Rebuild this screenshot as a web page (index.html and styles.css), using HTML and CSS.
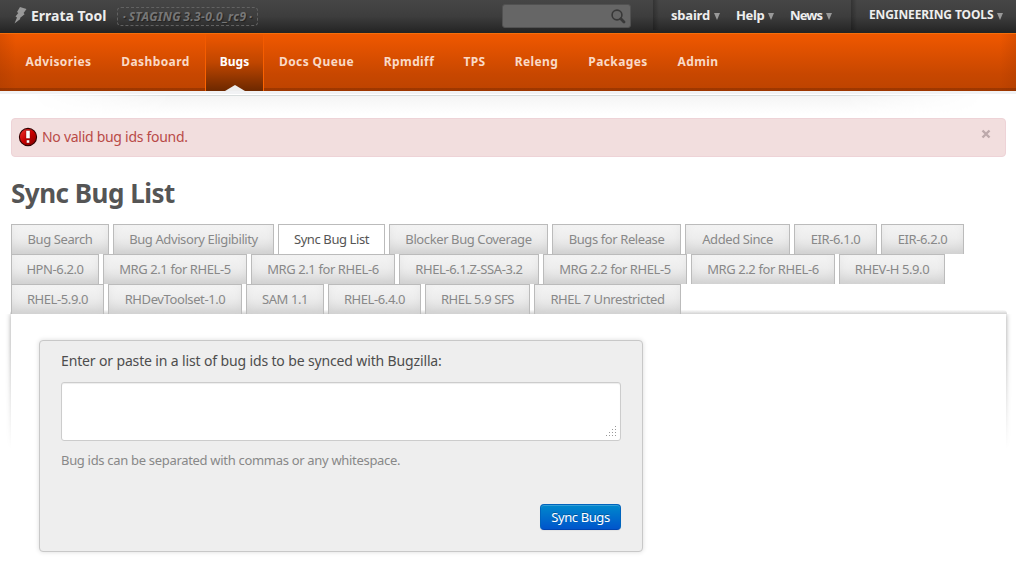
FILE: index.html
```html
<!DOCTYPE html>
<html lang="en">
<head>
<meta charset="utf-8">
<title>Sync Bug List</title>
<link rel="stylesheet" href="styles.css">
</head>
<body>
<header class="topbar">
  <svg class="bolt" width="13" height="17" viewBox="0 0 13 17"><path d="M6 0L12.5 2 9.6 6 10.6 7.2 6 11 6.3 12 .5 16.5 3 10.5 1.5 9.5 4.3 6 3 5z" fill="#999"/></svg>
  <a class="brand">Errata Tool</a>
  <span class="staging">· STAGING 3.3-0.0_rc9 ·</span>
  <div class="search"><svg width="15" height="15" viewBox="0 0 15 15" fill="none" stroke="#383838"><circle cx="6" cy="6" r="4.9" stroke-width="1.6"/><path d="M9.8 9.8L13 13" stroke-width="2.8" stroke-linecap="round"/></svg></div>
  <div class="menus">
    <a class="m-user">sbaird<i></i></a>
    <a class="m-help">Help<i></i></a>
    <a class="m-news">News<i></i></a>
  </div>
  <div class="tools"><a>ENGINEERING TOOLS<i></i></a></div>
</header>
<nav class="nav">
  <a style="width:95px">Advisories</a>
  <a style="width:99px">Dashboard</a>
  <a class="current" style="width:59px">Bugs</a>
  <a style="width:105px">Docs Queue</a>
  <a style="width:80px">Rpmdiff</a>
  <a style="width:51px">TPS</a>
  <a style="width:73px">Releng</a>
  <a style="width:90px">Packages</a>
  <a style="width:70px">Admin</a>
</nav>
<div class="under"><div class="under-shade"></div></div>
<main>
  <div class="alert">
    <svg width="20" height="20" viewBox="0 0 20 20"><defs><linearGradient id="g" x2="1" y2="1"><stop offset="0" stop-color="#ed3832"/><stop offset=".5" stop-color="#c80000"/><stop offset="1" stop-color="#7d0000"/></linearGradient></defs><circle cx="10" cy="10" r="8.6" fill="url(#g)" stroke="#300" stroke-width="1.1"/><path d="M8 3.5h4v8H8zM8.5 13h3v3h-3z" fill="#fff" stroke="#700" stroke-width=".4"/></svg>
    <span class="alert-text">No valid bug ids found.</span>
    <svg class="close" width="10" height="10" viewBox="0 0 10 10"><path d="M1.5 1.5L8.5 8.5M8.5 1.5L1.5 8.5" stroke="#bda9ab" stroke-width="2.4"/></svg>
  </div>
  <h1>Sync Bug List</h1>
  <div class="tabs">
    <div class="row">
      <a style="width:98px">Bug Search</a>
      <a style="width:161px">Bug Advisory Eligibility</a>
      <a class="active" style="width:107px">Sync Bug List</a>
      <a style="width:159px">Blocker Bug Coverage</a>
      <a style="width:129px">Bugs for Release</a>
      <a style="width:105px">Added Since</a>
      <a style="width:83px">EIR-6.1.0</a>
      <a style="width:83px">EIR-6.2.0</a>
    </div>
    <div class="row">
      <a style="width:88px">HPN-6.2.0</a>
      <a style="width:144px">MRG 2.1 for RHEL-5</a>
      <a style="width:144px">MRG 2.1 for RHEL-6</a>
      <a style="width:140px">RHEL-6.1.Z-SSA-3.2</a>
      <a style="width:144px">MRG 2.2 for RHEL-5</a>
      <a style="width:144px">MRG 2.2 for RHEL-6</a>
      <a style="width:106px">RHEV-H 5.9.0</a>
    </div>
    <div class="row">
      <a style="width:93px">RHEL-5.9.0</a>
      <a style="width:134px">RHDevToolset-1.0</a>
      <a style="width:78px">SAM 1.1</a>
      <a style="width:93px">RHEL-6.4.0</a>
      <a style="width:105px">RHEL 5.9 SFS</a>
      <a style="width:147px">RHEL 7 Unrestricted</a>
    </div>
  </div>
  <section class="panel">
    <form class="card">
      <label for="ids">Enter or paste in a list of bug ids to be synced with Bugzilla:</label>
      <div class="field">
        <textarea id="ids"></textarea>
        <svg class="grip" width="10" height="10" viewBox="0 0 10 10" fill="#999"><path d="M9 0h1v1H9zM6 3h1v1H6zM9 3h1v1H9zM3 6h1v1H3zM6 6h1v1H6zM9 6h1v1H9zM0 9h1v1H0zM3 9h1v1H3zM6 9h1v1H6zM9 9h1v1H9z"/></svg>
      </div>
      <p>Bug ids can be separated with commas or any whitespace.</p>
      <button type="button">Sync Bugs</button>
    </form>
  </section>
</main>
</body>
</html>
```
FILE: styles.css
```css
* { box-sizing: border-box; }
body {
  margin: 0;
  width: 1016px;
  height: 562px;
  overflow: hidden;
  background: #fff;
  font: 13px/18px "Noto Sans", "Open Sans", sans-serif;
  color: #4d4d4d;
}
a, span, label, p, h1, button { white-space: nowrap; }

.topbar {
  display: flex;
  height: 33px;
  background: linear-gradient(#464646, #3d3d3d 50%, #232323);
  color: #eee;
  font-weight: bold;
}
.bolt { margin: 7px 0 0 14px; flex: none; }
.brand { width: 76px; margin: 7px 0 0 4px; font-size: 14px; letter-spacing: 0; }
.staging {
  width: 141px;
  height: 19px;
  margin: 7px 0 0 10px;
  border: 1px dashed #626262;
  border-radius: 4px;
  color: #777;
  font-size: 12px;
  line-height: 17px;
  font-style: italic;
  letter-spacing: 0.35px;
  word-spacing: -1px;
  text-align: center;
  text-indent: 0;
  text-shadow: 1px 1px 1px #222;
}
.search {
  display: flex;
  justify-content: flex-end;
  width: 129px;
  height: 24px;
  margin: 4px 0 0 244px;
  padding: 4px 4px 0 0;
  border: 1px solid #515151;
  border-radius: 3px;
  background: #666;
}
.menus {
  display: flex;
  width: 198px;
  height: 30px;
  margin-left: 22px;
  padding: 6px 0 0 18px;
  background: linear-gradient(90deg, rgba(0,0,0,.25), rgba(0,0,0,0) 6px);
}
.tools {
  height: 30px;
  padding: 6px 0 0 18px;
  font-size: 12px;
  background: linear-gradient(90deg, rgba(0,0,0,.25), rgba(0,0,0,0) 6px);
}
.menus a, .tools a { display: flex; justify-content: space-between; }
.menus i, .tools i {
  width: 6px;
  height: 7px;
  margin-top: 7px;
  background: #999;
  clip-path: polygon(0 0, 100% 0, 50% 100%);
}
.m-user { width: 49px; letter-spacing: -0.2px; }
.m-help { width: 38px; margin-left: 16px; letter-spacing: -0.4px; }
.m-news { width: 42px; margin-left: 16px; letter-spacing: -0.9px; }
.tools a { width: 134px; letter-spacing: -0.1px; }

.nav {
  display: flex;
  height: 58px;
  padding-left: 11px;
  border-top: 1px solid #f56f0b;
  background:
    linear-gradient(rgba(120,40,0,.45), rgba(120,40,0,.45)) 0 100% / 100% 3px no-repeat,
    linear-gradient(90deg, rgba(150,50,0,.22), rgba(150,50,0,0) 16px, rgba(150,50,0,0) 1000px, rgba(150,50,0,.22)),
    linear-gradient(#f05800, #c84700 70%, #bd4300);
}
.nav a {
  padding-top: 19px;
  text-align: center;
  font-size: 12px;
  font-weight: bold;
  letter-spacing: 0.4px;
  color: #fadac7;
}
.nav .current {
  position: relative;
  border: solid #f06310;
  border-width: 0 1px;
  border-image: linear-gradient(#f05800, #ff6600) 1;
  border-image-width: 0 1px;
  background: linear-gradient(#ee5700, #c04600 50%, #6c2800);
  letter-spacing: 0;
  color: #fff;
}
.nav .current::after {
  content: "";
  position: absolute;
  left: 19px;
  bottom: 0;
  width: 20px;
  height: 6px;
  background: #eee;
  clip-path: polygon(50% 0, 100% 100%, 0 100%);
}
.under { height: 27px; border-top: 3px solid #f1f2f4; padding: 1px 30px 0; }
.under-shade {
  height: 20px;
  border-top: 1px solid #d8dddd;
  background: linear-gradient(#f5f5f5, #fff);
  -webkit-mask-image: linear-gradient(90deg, transparent, #000 15%, #000 85%, transparent);
  mask-image: linear-gradient(90deg, transparent, #000 15%, #000 85%, transparent);
}

main { padding: 0 10px 0 11px; }
.alert {
  display: flex;
  height: 39px;
  padding: 8px 15px 0 6px;
  border: 1px solid #eed3d7;
  border-radius: 4px;
  background: #f2dede;
  color: #b94a48;
}
.alert-text { margin: 1px 0 0 4px; font-size: 14px; letter-spacing: -0.28px; }
.close { margin: 2px -1px 0 auto; }
h1 {
  height: 36px;
  margin: 18px 0 13px;
  font-size: 26px;
  line-height: 36px;
  letter-spacing: -0.5px;
  color: #555;
}
.row { display: flex; gap: 4px; height: 30px; }
.row a {
  border: 1px solid #bbb;
  border-bottom: 0;
  background: linear-gradient(#f4f4f4, #ededed 45%, #d8d8d8);
  box-shadow: inset 0 -3px 10px rgba(0,0,0,.045);
  color: #888;
  text-align: center;
  line-height: 29px;
  letter-spacing: -0.4px;
}
.row .active { background: #fff; box-shadow: none; color: #555; }
.panel {
  position: relative;
  height: 248px;
  padding: 26px 0 0 28px;
  background: #fff;
}
.panel::before {
  content: "";
  position: absolute;
  z-index: -1;
  inset: 0;
  box-shadow: 0 0 5px rgba(0,0,0,.38);
  clip-path: inset(0 -7px);
  -webkit-mask: linear-gradient(#000 30px, transparent 135px) no-clip;
  mask: linear-gradient(#000 30px, transparent 135px) no-clip;
}
.panel::after {
  content: "";
  position: absolute;
  z-index: -1;
  inset: -4px -1px auto;
  height: 4px;
  border-radius: 4px 4px 0 0;
  background: linear-gradient(#fbfbfb, #d2d2d2);
}
.card {
  display: flex;
  flex-direction: column;
  width: 604px;
  height: 212px;
  padding: 11px 21px;
  border: 1px solid #c8c8c8;
  border-radius: 4px;
  background: #eee;
  box-shadow: 0 0 5px rgba(0,0,0,.14);
}
label { height: 18px; font-size: 14px; letter-spacing: -0.14px; }
.field { position: relative; height: 59px; margin-top: 12px; }
textarea {
  display: block;
  width: 560px;
  height: 59px;
  border: 1px solid #ccc;
  border-radius: 3px;
  background: #fff;
  box-shadow: inset 0 1px 1px rgba(0,0,0,.075);
  resize: none;
}
.grip { position: absolute; right: 5px; bottom: 5px; }
p { margin: 10px 0 0; font-size: 13px; color: #888; letter-spacing: -0.31px; }
button {
  align-self: flex-end;
  width: 81px;
  height: 26px;
  margin-top: 35px;
  padding: 0;
  border: 1px solid #0064bd;
  border-bottom-color: #0044b0;
  border-radius: 4px;
  background: linear-gradient(#0088cc, #0055cc);
  box-shadow: inset 0 1px 0 rgba(255,255,255,.2), 0 1px 1px rgba(0,0,0,.05);
  color: #fff;
  font: 13px/22px "Noto Sans", sans-serif;
  letter-spacing: -0.4px;
  text-shadow: 0 -1px 0 rgba(0,0,0,.25);
}
```
